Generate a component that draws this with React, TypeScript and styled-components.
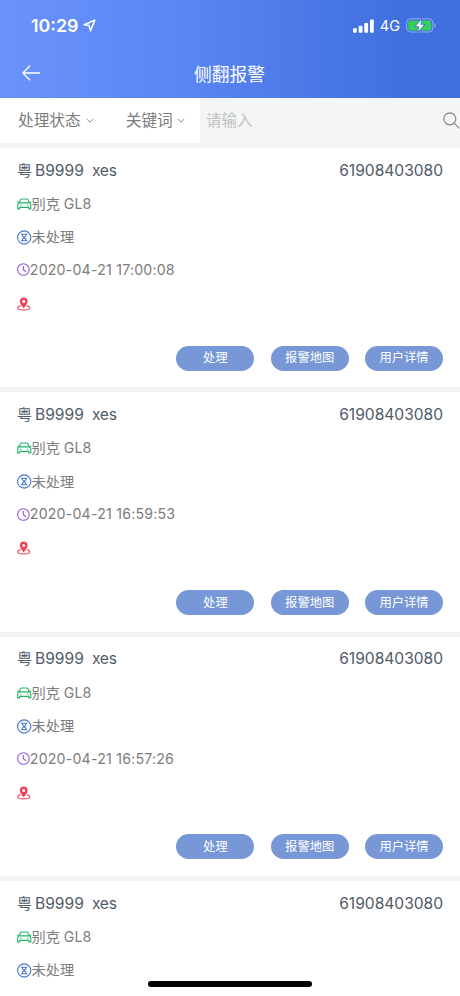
import React from 'react';
import styled, { createGlobalStyle } from 'styled-components';

const GlobalStyle = createGlobalStyle`
  * { box-sizing: border-box; }
  body {
    margin: 0;
    overflow: hidden;
    background: #fff;
    font-family: Inter, "Noto Sans CJK SC", sans-serif;
  }
`;

const Screen = styled.div`
  position: relative;
  width: 460px;
  height: 996px;
  overflow: hidden;
  background: #f0f2f4;
`;

const Header = styled.header`
  height: 98px;
  color: #fff;
  background: linear-gradient(90deg, #6a92fc 0%, #5a86f2 40%, #4a78e6 68%, #4070df 88%, #4070df 100%);
`;

const StatusBar = styled.div`
  height: 51px;
  display: flex;
  align-items: center;
  justify-content: space-between;
  padding: 0 24px 0 31px;
`;

const StatusGroup = styled.div<{ $gap: number }>`
  display: flex;
  align-items: center;
  gap: ${p => p.$gap}px;
`;

const Clock = styled.span`
  font-size: 17.8px;
  font-weight: 600;
  line-height: 20px;
`;

const Network = styled.span`
  font-size: 14.5px;
  font-weight: 400;
  line-height: 20px;
`;

const NavBar = styled.div`
  height: 47px;
  display: grid;
  grid-template-columns: 60px 1fr 60px;
  align-items: center;
`;

const BackButton = styled.button`
  border: 0;
  padding: 0 0 3px 22px;
  background: none;
  color: inherit;
  display: flex;
`;

const Title = styled.h1`
  margin: 0 1px 0 0;
  text-align: center;
  font-size: 17.8px;
  font-weight: 400;
  line-height: 26px;
`;

const FilterBar = styled.div`
  display: flex;
  height: 50px;
  background: #f0f2f4;
`;

const Filters = styled.div`
  width: 200px;
  height: 45px;
  display: flex;
  align-items: center;
  padding-left: 18px;
  gap: 32px;
  background: #fff;
`;

const Filter = styled.div<{ $gap: number }>`
  display: flex;
  align-items: center;
  gap: ${p => p.$gap}px;
  color: #7c7c7c;
  font-size: 15.7px;
  line-height: 22px;
`;

const Search = styled.div`
  flex: 1;
  height: 45px;
  display: flex;
  align-items: center;
  justify-content: space-between;
  padding-left: 6px;
  background: #f4f5f5;
  color: #bfc1c1;
  font-size: 15.5px;
  line-height: 22px;
`;

const List = styled.main`
  display: flex;
  flex-direction: column;
  gap: 5px;
`;

const Card = styled.article`
  height: 239.35px;
  flex: none;
  padding: 6px 17px 0;
  background: #fff;
`;

const CardTitle = styled.div`
  height: 33.3px;
  display: flex;
  align-items: center;
  justify-content: space-between;
  color: #505b67;
  font-size: 15.6px;
  line-height: 22px;
`;

const Plate = styled.span`
  display: flex;
`;

const Region = styled.span`
  width: 18px;
  font-size: 15px;
`;

const Owner = styled.span`
  margin-left: 8px;
  letter-spacing: -0.2px;
`;

const Phone = styled.span`
  letter-spacing: -0.02px;
`;

const Row = styled.div`
  height: 33.35px;
  display: flex;
  align-items: center;
  color: #7c7c7c;
  font-size: 14.2px;
  line-height: 20px;
  svg { flex: none; }
`;

const TimeRow = styled(Row)`
  padding-bottom: 1.4px;
  letter-spacing: 0.19px;
`;

const Actions = styled.div`
  display: flex;
  justify-content: flex-end;
  gap: 16.3px;
  margin-top: 25px;
`;

const Action = styled.button`
  width: 78px;
  height: 25px;
  padding: 0;
  border: 0;
  border-radius: 13px;
  background: #7897d6;
  color: #fff;
  font-family: inherit;
  font-size: 12.3px;
  line-height: 24px;
`;

const HomeIndicator = styled.div`
  position: absolute;
  left: 148px;
  bottom: 9px;
  width: 164px;
  height: 6px;
  border-radius: 3px;
  background: #000;
`;

const LocationArrow = () => (
  <svg width="13" height="13" viewBox="0 0 13 13" fill="none" stroke="#fff" strokeWidth="1.5" strokeLinejoin="round">
    <path d="M11.8 1.1 1.2 5.8 6.1 6.6 7.5 11.7Z" />
  </svg>
);

const Signal = () => (
  <svg width="21" height="14" viewBox="0 0 21 14" fill="#fff">
    <rect x="0" y="9.3" width="3.8" height="4.4" rx="1" />
    <rect x="5.7" y="6.8" width="3.8" height="6.9" rx="1" />
    <rect x="11.3" y="4" width="3.8" height="9.7" rx="1" />
    <rect x="17" y="0.5" width="3.8" height="13.2" rx="1" />
  </svg>
);

const Battery = () => (
  <svg width="30" height="15" viewBox="0 0 30 15">
    <rect x="0.6" y="0.8" width="26.3" height="13.2" rx="4" fill="none" stroke="#8fadec" />
    <path d="M28.3 5v4.8c1.8-.8 1.8-4 0-4.8Z" fill="#8fadec" />
    <rect x="2.2" y="2.4" width="23" height="10" rx="2.5" fill="#34cf5b" />
    <path d="M15.2 1.8 9.8 8.2h3.5l-1.1 5 5.8-6.4h-3.6Z" fill="none" stroke="#4070df" strokeWidth="1.6" />
    <path d="M15.2 1.8 9.8 8.2h3.5l-1.1 5 5.8-6.4h-3.6Z" fill="#fff" />
  </svg>
);

const BackArrow = () => (
  <svg width="19" height="16" viewBox="0 0 19 16" fill="none" stroke="#fff" strokeWidth="1.3">
    <path d="M8 .8.9 8 8 15.2M1 8h17" />
  </svg>
);

const Chevron = () => (
  <svg width="8" height="6" viewBox="0 0 8 6" fill="none" stroke="#888" strokeWidth="1">
    <path d="m.8 1 3.2 3.2L7.2 1" />
  </svg>
);

const SearchIcon = () => (
  <svg width="17" height="17" viewBox="0 0 17 17" fill="none" stroke="#858787" strokeWidth="1.2">
    <circle cx="6.8" cy="6.8" r="6" />
    <path d="m11.1 11.1 5.2 5.2" />
  </svg>
);

const CarIcon = () => (
  <svg width="14.5" height="12" viewBox="0 0 14.5 12" fill="none" stroke="#24b56b" strokeWidth="1.1" strokeLinejoin="round">
    <path d="M2.3 4.9 3.5 1.7Q3.8 1 4.5 1H10q.7 0 1 .7l1.2 3.2M.1 4h1.8M12.6 4h1.8M2.3 4.9h9.9q1.6.4 1.6 2v4h-2V9.4H2.7v1.5h-2v-4q0-1.6 1.6-2Z" />
    <path d="M3.2 7.2h1.3M10 7.2h1.3" />
  </svg>
);

const HourglassIcon = () => (
  <svg width="14.5" height="15" viewBox="0 0 14.5 15" fill="none" stroke="#4774c4" strokeWidth="1.1">
    <circle cx="7.2" cy="7.5" r="6.6" />
    <path d="M4 4.3h6.4M4 10.8h6.4M5.1 4.3c0 2 .9 2.5 2.1 3.2 1.2-.7 2.1-1.2 2.1-3.2M5.1 10.8c0-2 .9-2.6 2.1-3.3 1.2.7 2.1 1.3 2.1 3.3" />
  </svg>
);

const ClockIcon = () => (
  <svg width="12.8" height="13" viewBox="0 0 12.8 13" fill="none" stroke="#9855df" strokeWidth="1.1">
    <circle cx="6.4" cy="6.5" r="5.8" />
    <path d="M6.3 2.9v3.9l2.7 2" />
  </svg>
);

const PinIcon = () => (
  <svg width="14" height="14" viewBox="0 0 14 14">
    <path d="M3.7 8.8C1.7 9.1.6 9.8.6 10.8c0 1.4 2.8 2.1 6.1 2.1s6.1-.7 6.1-2.1c0-1-1.1-1.7-3.1-2" fill="none" stroke="#ed5268" strokeWidth="1.2" />
    <path fillRule="evenodd" d="M6.7.4a3.9 3.9 0 0 0-3.9 4c0 2.5 3.9 6.7 3.9 6.7s3.9-4.2 3.9-6.7a3.9 3.9 0 0 0-3.9-4Zm0 2.5a1.5 1.5 0 1 1 0 3 1.5 1.5 0 0 1 0-3Z" fill="#ed4059" />
  </svg>
);

const alarms: { id: number; time?: string }[] = [
  { id: 1, time: '2020-04-21 17:00:08' },
  { id: 2, time: '2020-04-21 16:59:53' },
  { id: 3, time: '2020-04-21 16:57:26' },
  { id: 4 },
];

const AlarmCard = ({ time }: { time?: string }) => (
  <Card>
    <CardTitle>
      <Plate><Region>粤</Region>B9999<Owner>xes</Owner></Plate>
      <Phone>61908403080</Phone>
    </CardTitle>
    <Row><CarIcon />别克 GL8</Row>
    <Row><HourglassIcon />未处理</Row>
    {time && (
      <>
        <TimeRow><ClockIcon />{time}</TimeRow>
        <Row><PinIcon /></Row>
        <Actions>
          <Action>处理</Action>
          <Action>报警地图</Action>
          <Action>用户详情</Action>
        </Actions>
      </>
    )}
  </Card>
);

export default function App() {
  return (
    <>
      <GlobalStyle />
      <Screen>
        <Header>
          <StatusBar>
            <StatusGroup $gap={5}><Clock>10:29</Clock><LocationArrow /></StatusGroup>
            <StatusGroup $gap={6}><Signal /><Network>4G</Network><Battery /></StatusGroup>
          </StatusBar>
          <NavBar>
            <BackButton aria-label="返回"><BackArrow /></BackButton>
            <Title>侧翻报警</Title>
          </NavBar>
        </Header>
        <FilterBar>
          <Filters>
            <Filter $gap={5}>处理状态<Chevron /></Filter>
            <Filter $gap={4}>关键词<Chevron /></Filter>
          </Filters>
          <Search>请输入<SearchIcon /></Search>
        </FilterBar>
        <List>
          {alarms.map(alarm => <AlarmCard key={alarm.id} time={alarm.time} />)}
        </List>
        <HomeIndicator />
      </Screen>
    </>
  );
}
